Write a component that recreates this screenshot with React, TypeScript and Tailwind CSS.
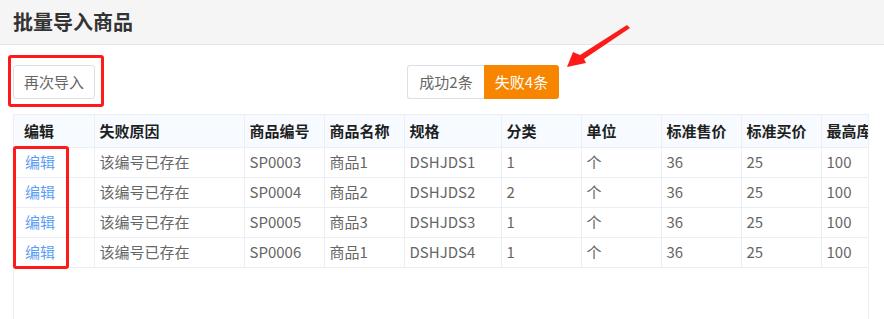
import React from 'react';

const cols = [
  { title: '编辑', w: 80 },
  { title: '失败原因', w: 150 },
  { title: '商品编号', w: 80 },
  { title: '商品名称', w: 80 },
  { title: '规格', w: 97 },
  { title: '分类', w: 80 },
  { title: '单位', w: 80 },
  { title: '标准售价', w: 80 },
  { title: '标准买价', w: 80 },
  { title: '最高库存', w: 80 },
];

const rows = [
  ['该编号已存在', 'SP0003', '商品1', 'DSHJDS1', '1', '个', '36', '25', '100'],
  ['该编号已存在', 'SP0004', '商品2', 'DSHJDS2', '2', '个', '36', '25', '100'],
  ['该编号已存在', 'SP0005', '商品3', 'DSHJDS3', '1', '个', '36', '25', '100'],
  ['该编号已存在', 'SP0006', '商品1', 'DSHJDS4', '1', '个', '36', '25', '100'],
];

const App: React.FC = () => {
  return (
    <div
      className="relative w-[884px] h-[319px] overflow-hidden bg-white"
      style={{ fontFamily: '"Noto Sans CJK SC", "Noto Sans", sans-serif' }}
    >
      {/* Header */}
      <div className="h-[45px] bg-[#f5f5f5] border-b border-[#e6e6e6] flex items-center pl-[13px]">
        <h1 className="text-[20px] font-bold text-[#333] leading-none">批量导入商品</h1>
      </div>

      {/* Toolbar */}
      <div className="flex items-start pl-[13px] pt-[20px] h-[69px]">
        <button className="w-[82px] h-[34px] border border-[#dcdfe6] rounded-[3px] text-[15px] text-[#666] bg-white">
          再次导入
        </button>
        <div className="ml-[312px] flex h-[34px] text-[15px]">
          <button className="w-[77px] border border-[#dcdfe6] border-r-0 rounded-l-[3px] text-[#666] bg-white">
            成功2条
          </button>
          <button className="w-[75px] rounded-r-[3px] bg-[#f78500] text-white">失败4条</button>
        </div>
      </div>

      {/* Table */}
      <div className="ml-[13px] w-[856px] h-[220px] border-l border-r border-t border-[#ebeef5] overflow-hidden">
        <table className="table-fixed border-collapse text-[15px]" style={{ width: 887 }}>
          <colgroup>
            {cols.map((c, i) => (
              <col key={i} style={{ width: c.w }} />
            ))}
          </colgroup>
          <thead>
            <tr className="h-[32px] bg-[#f7fbff]">
              {cols.map((c, i) => (
                <th
                  key={i}
                  className={`text-left font-bold text-[#1f1f1f] border-b border-r border-[#ebeef5] whitespace-nowrap overflow-hidden ${
                    i === 0 ? 'pl-[10px]' : 'pl-[5px]'
                  }`}
                >
                  {c.title}
                </th>
              ))}
            </tr>
          </thead>
          <tbody>
            {rows.map((r, ri) => (
              <tr key={ri} className="h-[30px]">
                <td className="pl-[11px] text-[#5c9ef5] border-b border-r border-[#ebeef5]">编辑</td>
                {r.map((v, ci) => (
                  <td
                    key={ci}
                    className="pl-[5px] text-[#666] border-b border-r border-[#ebeef5] whitespace-nowrap"
                  >
                    {v}
                  </td>
                ))}
              </tr>
            ))}
          </tbody>
        </table>
      </div>

      {/* Annotations */}
      <div className="absolute left-[8px] top-[55px] w-[96px] h-[52px] border-[3px] border-[#ff1a1a] rounded-[3px]" />
      <div className="absolute left-[13px] top-[146px] w-[56px] h-[123px] border-[3px] border-[#ff1a1a] rounded-[3px]" />
      <svg className="absolute left-0 top-0" width="884" height="319">
        <polygon points="627,25 630,28 584,59 586,63 567,67 573,52 580,55" fill="#ff1a1a" />
      </svg>
    </div>
  );
};

export default App;
